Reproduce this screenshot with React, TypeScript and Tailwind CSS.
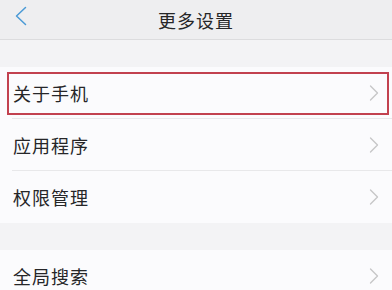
import { ReactNode } from 'react'

const font = { fontFamily: '"Noto Sans CJK SC", "Noto Sans", sans-serif' }

function Chevron() {
  return (
    <svg width="10" height="16" viewBox="0 0 10 16" className="shrink-0">
      <path d="M1.5 1 L8.5 8 L1.5 15" fill="none" stroke="#c6c6c8" strokeWidth="1.4" strokeLinecap="round" strokeLinejoin="round" />
    </svg>
  )
}

function Row({ label, divider, children }: { label: string; divider?: boolean; children?: ReactNode }) {
  return (
    <div className="relative h-[52px] bg-[#fbfbfd]">
      <div className="flex h-full items-center justify-between pl-[13px] pr-[13px]">
        <span className="text-[18px] leading-none tracking-[1px] text-[#262628]">{label}</span>
        <Chevron />
      </div>
      {divider && <div className="absolute bottom-0 left-[12px] right-0 h-px bg-[#e8e8ea]" />}
      {children}
    </div>
  )
}

export default function App() {
  return (
    <div className="h-[290px] w-[392px] overflow-hidden bg-[#f3f3f5]" style={font}>
      <div className="relative flex h-[40px] items-center justify-center border-b border-[#dcdcde] bg-[#eeeef0]">
        <svg width="14" height="20" viewBox="0 0 14 20" className="absolute left-[14px] top-[6px]">
          <path d="M11.5 1.5 L2.5 10 L11.5 18.5" fill="none" stroke="#4a9ad6" strokeWidth="1.5" strokeLinecap="round" strokeLinejoin="round" />
        </svg>
        <span className="text-[18px] leading-none tracking-[1px] text-[#262628]">更多设置</span>
      </div>
      <div className="h-[27px]" />
      <Row label="关于手机" divider>
        <div className="absolute left-[7px] right-[3px] top-[5px] bottom-[4px] border-2 border-[#c2414f]" />
      </Row>
      <Row label="应用程序" divider />
      <Row label="权限管理" />
      <div className="h-[27px]" />
      <Row label="全局搜索" />
    </div>
  )
}
